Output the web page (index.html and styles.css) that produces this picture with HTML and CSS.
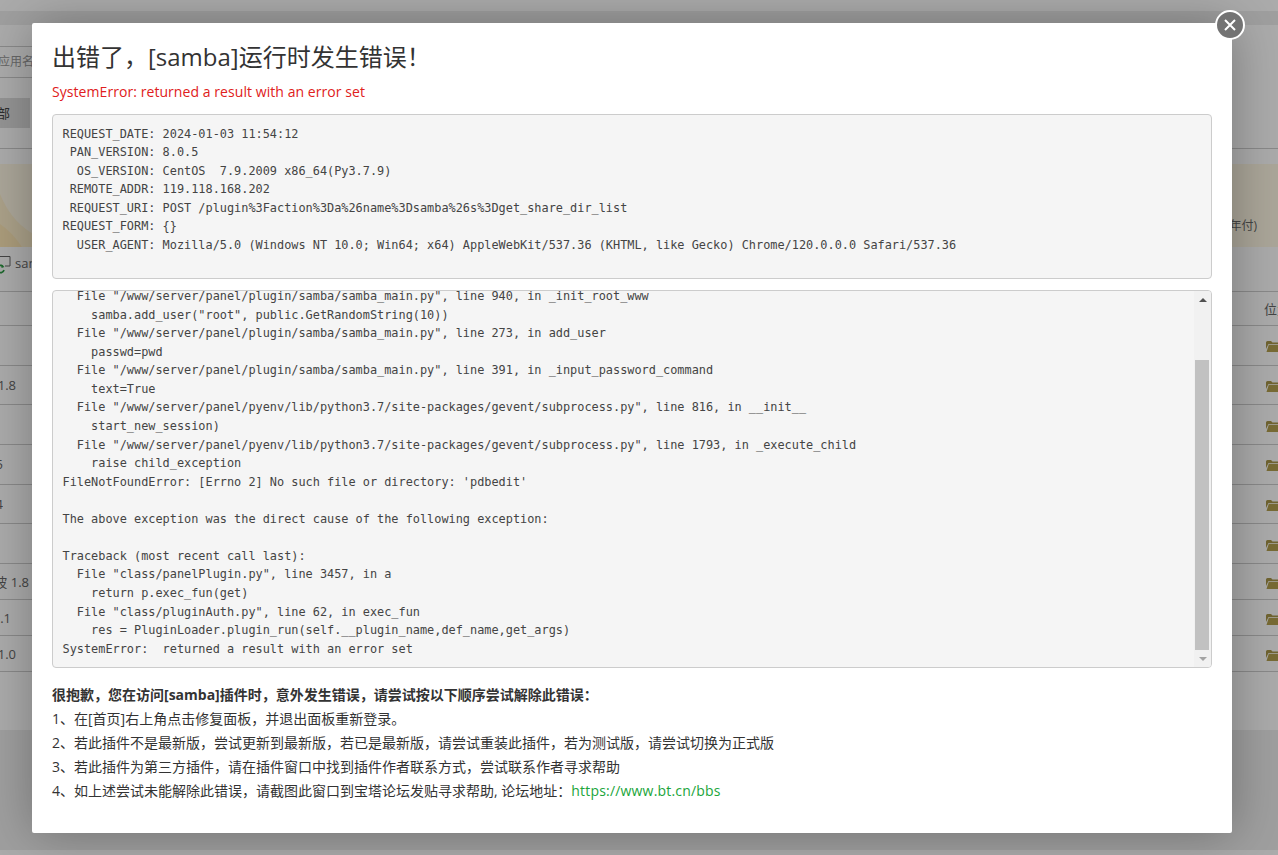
FILE: index.html
```html
<!DOCTYPE html>
<html lang="zh-CN">
<head>
<meta charset="utf-8">
<title>宝塔面板</title>
<link rel="stylesheet" href="styles.css">
</head>
<body>
<div class="page">
  <div class="topbar"></div>
  <div class="panel">
    <div class="search">
      <span class="search-box">应用名称</span>
      <span class="filter-btn"><span class="filter-text">全部</span></span>
    </div>
    <div class="banner">
      <svg class="waves" viewBox="0 0 60 83" preserveAspectRatio="none"><path d="M0 30Q10 55 30 68T60 83H0z" fill="#fff0cc"/><path d="M0 60Q12 68 22 83H0z" fill="#ffe9b8"/></svg>
      <span class="banner-note">半年付)</span>
    </div>
    <div class="recent">
      <svg class="recent-icon" viewBox="0 0 16 20"><path d="M0 1.500h15V11h-5" fill="none" stroke="#666" stroke-width="1"/><path d="M2 13a3.500 3.500 0 0 1 6-1.500M9 15a3.500 3.500 0 0 1-6 1.500" fill="none" stroke="#2e9b45" stroke-width="1.700"/><path d="M6.500 9.500l3 2.500-3 1zM4.500 18.500l-3-2.500 3-1z" fill="#2e9b45"/></svg>
      <span class="recent-name">samba</span>
    </div>
    <div class="table">
      <div class="row head"><span></span><span class="pos">位置</span></div>
      <div class="row r40"><span class="cell"></span><svg class="folder"><use href="#fd"/></svg></div>
      <div class="row r40"><span class="cell w16">1.8</span><svg class="folder"><use href="#fd"/></svg></div>
      <div class="row r40"><span class="cell"></span><svg class="folder"><use href="#fd"/></svg></div>
      <div class="row r40"><span class="cell w3">5</span><svg class="folder"><use href="#fd"/></svg></div>
      <div class="row r40"><span class="cell w3">4</span><svg class="folder"><use href="#fd"/></svg></div>
      <div class="row r40"><span class="cell"></span><svg class="folder"><use href="#fd"/></svg></div>
      <div class="row r36"><span class="cell w29">波 1.8</span><svg class="folder"><use href="#fd"/></svg></div>
      <div class="row r36"><span class="cell w11">2.1</span><svg class="folder"><use href="#fd"/></svg></div>
      <div class="row r36"><span class="cell w16">1.0</span><svg class="folder"><use href="#fd"/></svg></div>
    </div>
  </div>
  <div class="gap"></div>
  <div class="footer"></div>
</div>
<svg class="defs" width="0" height="0"><defs><g id="fd"><path d="M0 2.500Q0 1 1.500 1H5l1.500 1.500H12V4H2.500L0 9z" fill="#a8954a"/><path d="M2.800 4.800H14L12 12H.5z" fill="#b3a04f"/></g></defs></svg>

<div class="mask"></div>

<div class="modal">
  <button class="close" aria-label="关闭"><svg viewBox="0 0 12 12"><path d="M1 1l10 10M11 1L1 11" stroke="#fff" stroke-width="2" fill="none"/></svg></button>
  <h3 class="title">出错了，[samba]运行时发生错误！</h3>
  <p class="err">SystemError: returned a result with an error set</p>
  <pre class="info">REQUEST_DATE: 2024-01-03 11:54:12
 PAN_VERSION: 8.0.5
  OS_VERSION: CentOS  7.9.2009 x86_64(Py3.7.9)
 REMOTE_ADDR: 119.118.168.202
 REQUEST_URI: POST /plugin%3Faction%3Da%26name%3Dsamba%26s%3Dget_share_dir_list
REQUEST_FORM: {}
  USER_AGENT: Mozilla/5.0 (Windows NT 10.0; Win64; x64) AppleWebKit/537.36 (KHTML, like Gecko) Chrome/120.0.0.0 Safari/537.36
</pre>
  <div class="trace">
    <pre class="trace-text">  File "/www/server/panel/plugin/samba/samba_main.py", line 940, in _init_root_www
    samba.add_user("root", public.GetRandomString(10))
  File "/www/server/panel/plugin/samba/samba_main.py", line 273, in add_user
    passwd=pwd
  File "/www/server/panel/plugin/samba/samba_main.py", line 391, in _input_password_command
    text=True
  File "/www/server/panel/pyenv/lib/python3.7/site-packages/gevent/subprocess.py", line 816, in __init__
    start_new_session)
  File "/www/server/panel/pyenv/lib/python3.7/site-packages/gevent/subprocess.py", line 1793, in _execute_child
    raise child_exception
FileNotFoundError: [Errno 2] No such file or directory: 'pdbedit'

The above exception was the direct cause of the following exception:

Traceback (most recent call last):
  File "class/panelPlugin.py", line 3457, in a
    return p.exec_fun(get)
  File "class/pluginAuth.py", line 62, in exec_fun
    res = PluginLoader.plugin_run(self.__plugin_name,def_name,get_args)
SystemError:  returned a result with an error set</pre>
    <div class="sb">
      <span class="arrow up"></span>
      <span class="track"><span class="thumb"></span></span>
      <span class="arrow down"></span>
    </div>
  </div>
  <ul class="tips">
    <li class="tips-head">很抱歉，您在访问[samba]插件时，意外发生错误，请尝试按以下顺序尝试解除此错误：</li>
    <li>1、在[首页]右上角点击修复面板，并退出面板重新登录。</li>
    <li>2、若此插件不是最新版，尝试更新到最新版，若已是最新版，请尝试重装此插件，若为测试版，请尝试切换为正式版</li>
    <li>3、若此插件为第三方插件，请在插件窗口中找到插件作者联系方式，尝试联系作者寻求帮助</li>
    <li>4、如上述尝试未能解除此错误，请截图此窗口到宝塔论坛发贴寻求帮助, 论坛地址：<a class="link" href="#">https://www.bt.cn/bbs</a></li>
  </ul>
</div>
</body>
</html>
```
FILE: styles.css
```css
* { box-sizing: border-box; }
html, body { margin: 0; height: 100%; overflow: hidden; }
body { font-family: "Open Sans", "Noto Sans CJK SC", sans-serif; font-size: 12px; color: #666; background: #f0f0f0; }
.defs { position: absolute; }
.page { height: 855px; display: flex; flex-direction: column; background: #eee; overflow: hidden; }
.topbar { height: 11px; background: #fff; flex: none; margin-bottom: 14px; }
.panel { height: 705px; flex: none; background: #fff; }
.gap { flex: 1; }
.footer { height: 5px; flex: none; background: #fff; }

.search { height: 124px; padding-top: 21px; border-bottom: 1px solid #ccc; }
.search-box { display: block; width: 40px; height: 32px; margin-left: -2px; border: 1px solid #ccc; border-left: 0; line-height: 30px; font-size: 12px; color: #999; white-space: nowrap; overflow: hidden; }
.filter-btn { display: block; width: 30px; height: 30px; margin-top: 20px; background: #ddd; line-height: 30px; font-size: 13px; color: #444; white-space: nowrap; overflow: hidden; }
.filter-text { display: block; margin-left: -16px; }

.banner { height: 83px; margin-top: 15px; background: #fff8e4; position: relative; overflow: hidden; }
.waves { position: absolute; left: 0; top: 0; width: 60px; height: 83px; }
.banner-note { position: absolute; right: 21px; top: 52px; font-size: 12px; color: #666; }

.recent { height: 44px; display: flex; align-items: center; gap: 4px; padding-bottom: 12px; white-space: nowrap; font-size: 13px; }
.recent-icon { width: 16px; height: 20px; margin-left: -5px; flex: none; margin-top: 3px; }

.table { border-top: 1px solid #ccc; }
.row { display: flex; justify-content: space-between; align-items: center; border-bottom: 1px solid #ccc; font-size: 13px; color: #666; }
.head { height: 34px; }
.r40 { height: 39.7px; }
.r36 { height: 36px; }
.pos { margin-right: -14px; width: 28px; white-space: nowrap; }
.cell { display: block; white-space: nowrap; text-align: right; direction: rtl; overflow: hidden; }
.w3 { width: 3px; }
.w11 { width: 11px; }
.w16 { width: 16px; }
.w29 { width: 29px; }
.folder { width: 14px; height: 13px; flex: none; margin: 3px -2px 0 0; overflow: visible; }

.mask { position: absolute; inset: 0; background: rgba(0,0,0,.33); }

.modal { position: absolute; left: 32px; top: 23px; width: 1200px; height: 810px; background: #fff; padding: 20px; box-shadow: 1px 1px 50px rgba(0,0,0,.3); border-radius: 2px; color: #333; }
.close { position: absolute; right: -13px; top: -13px; width: 30px; height: 30px; padding: 7px; border-radius: 50%; border: 2px solid #fff; background: #737373; }
.close svg { display: block; width: 12px; height: 12px; }
.title { margin: 0; font-size: 24px; font-weight: 400; line-height: 28px; height: 28px; color: #333; }
.err { margin: 11px 0 0; font-size: 14px; letter-spacing: .0625px; line-height: 20px; height: 20px; color: #e02020; }
pre { font-family: "DejaVu Sans Mono", monospace; font-size: 11.88px; line-height: 18.57px; color: #444; margin: 0; }
.info { margin-top: 12px; height: 165px; padding: 9.5px; background: #f5f5f5; border: 1px solid #ccc; border-radius: 4px; overflow: hidden; }
.trace { margin-top: 11px; height: 378px; background: #f5f5f5; border: 1px solid #ccc; border-radius: 4px; display: flex; overflow: hidden; }
.trace-text { flex: 1; padding: 0 9.5px; margin-top: -4px; overflow: hidden; }
.sb { width: 17px; flex: none; display: flex; flex-direction: column; background: #f1f1f1; }
.arrow { height: 17px; flex: none; display: flex; align-items: center; justify-content: center; }
.arrow::before { content: ""; border-left: 4px solid transparent; border-right: 4px solid transparent; }
.up::before { border-bottom: 4px solid #505050; }
.down::before { border-top: 4px solid #a3a3a3; }
.track { flex: 1; display: flex; flex-direction: column; justify-content: flex-end; }
.thumb { display: block; height: 290px; margin: 0 2px 0 1px; background: #c1c1c1; }
.tips { list-style: none; margin: 15px 0 0; padding: 0; font-size: 14px; color: #333; }
.tips li { line-height: 24px; height: 24px; white-space: nowrap; }
.tips-head { font-weight: 700; }
.link { color: #20a53a; text-decoration: none; letter-spacing: .19px; }
```
